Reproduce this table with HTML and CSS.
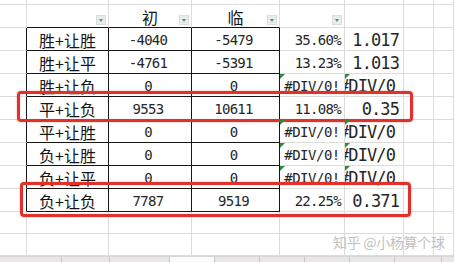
FILE: index.html
```html
<!DOCTYPE html>
<html lang="zh">
<head>
<meta charset="utf-8">
<link rel="stylesheet" href="styles.css">
</head>
<body>
<div class="sheet">
  <div class="grid">
    <!-- row 0 (partial) -->
    <div class="c"></div><div class="c"></div><div class="c"></div><div class="c"></div><div class="c"></div><div class="c"></div><div class="c"></div><div class="c"></div>
    <!-- header -->
    <div class="c"></div>
    <div class="c bb"><span class="flt"></span></div>
    <div class="c bb hd">初<span class="flt"></span></div>
    <div class="c bb hd">临<span class="flt"></span></div>
    <div class="c"><span class="flt"></span></div>
    <div class="c"></div><div class="c"></div><div class="c"></div>
    <!-- 1 -->
    <div class="c bl"></div>
    <div class="c bl bb cj">胜+让胜</div>
    <div class="c bl bb n">-4040</div>
    <div class="c bl bb n">-5479</div>
    <div class="c p">35.60%</div>
    <div class="c r">1.017</div>
    <div class="c"></div><div class="c"></div>
    <!-- 2 -->
    <div class="c bl"></div>
    <div class="c bl bb cj">胜+让平</div>
    <div class="c bl bb n">-4761</div>
    <div class="c bl bb n">-5391</div>
    <div class="c p">13.23%</div>
    <div class="c r">1.013</div>
    <div class="c"></div><div class="c"></div>
    <!-- 3 -->
    <div class="c bl"></div>
    <div class="c bl bb cj">胜+让负</div>
    <div class="c bl bb n">0</div>
    <div class="c bl bb n">0</div>
    <div class="c e tri">#DIV/0!</div>
    <div class="c x tri"><span class="clip"><span class="xt">#DIV/0!</span></span></div>
    <div class="c"></div><div class="c"></div>
    <!-- 4 -->
    <div class="c bl"></div>
    <div class="c bl bb cj">平+让负</div>
    <div class="c bl bb n">9553</div>
    <div class="c bl bb n">10611</div>
    <div class="c p">11.08%</div>
    <div class="c r">0.35</div>
    <div class="c"></div><div class="c"></div>
    <!-- 5 -->
    <div class="c bl"></div>
    <div class="c bl bb cj">平+让胜</div>
    <div class="c bl bb n">0</div>
    <div class="c bl bb n">0</div>
    <div class="c e tri">#DIV/0!</div>
    <div class="c x tri"><span class="clip"><span class="xt">#DIV/0!</span></span></div>
    <div class="c"></div><div class="c"></div>
    <!-- 6 -->
    <div class="c bl"></div>
    <div class="c bl bb cj">负+让胜</div>
    <div class="c bl bb n">0</div>
    <div class="c bl bb n">0</div>
    <div class="c e tri">#DIV/0!</div>
    <div class="c x tri"><span class="clip"><span class="xt">#DIV/0!</span></span></div>
    <div class="c"></div><div class="c"></div>
    <!-- 7 -->
    <div class="c bl"></div>
    <div class="c bl bb cj">负+让平</div>
    <div class="c bl bb n">0</div>
    <div class="c bl bb n">0</div>
    <div class="c e tri">#DIV/0!</div>
    <div class="c x tri"><span class="clip"><span class="xt">#DIV/0!</span></span></div>
    <div class="c"></div><div class="c"></div>
    <!-- 8 -->
    <div class="c bl"></div>
    <div class="c bl bb cj">负+让负</div>
    <div class="c bl bb n">7787</div>
    <div class="c bl bb n">9519</div>
    <div class="c p">22.25%</div>
    <div class="c r">0.371</div>
    <div class="c"></div><div class="c"></div>
    <!-- empty rows -->
    <div class="c"></div><div class="c"></div><div class="c"></div><div class="c"></div><div class="c"></div><div class="c"></div><div class="c"></div><div class="c"></div>
    <div class="c"></div><div class="c"></div><div class="c"></div><div class="c"></div><div class="c"></div><div class="c"></div><div class="c"></div><div class="c"></div>
  </div>
  <div class="tabs">
    <span class="t w62"></span><span class="t w48"></span><span class="t w60"></span><span class="t on w45"></span><span class="t w45"></span><span class="t w45"></span><span class="t w45"></span><span class="t w45"></span><span class="t w47"></span><span class="t fill"></span>
  </div>
  <div class="mark box1"></div>
  <div class="mark box2"></div>
  <div class="wm">知乎 @小杨算个球</div>
</div>
</body>
</html>
```

FILE: styles.css
```css
* { box-sizing: border-box; }
html, body { margin: 0; padding: 0; background: #fff; }
body {
  width: 454px;
  height: 262px;
  overflow: hidden;
  font-family: "Noto Sans CJK SC", sans-serif;
  color: #141414;
}
.sheet {
  position: relative;
  width: 454px;
  height: 262px;
  display: flex;
  flex-direction: column;
}
.grid {
  display: grid;
  grid-template-columns: 27px 82px 83px 88px 65px 59px 30px 20px;
  grid-template-rows: 5px 23px repeat(8, 23px) 22px 22px;
}
.c {
  position: relative;
  border-right: 1px solid #dcdcdc;
  border-bottom: 1px solid #dcdcdc;
  display: flex;
  align-items: center;
  justify-content: center;
  white-space: nowrap;
  line-height: 1;
}
.bl { border-right-color: #151515; }
.bb { border-bottom-color: #151515; }

.hd { font-size: 16px; padding-top: 1px; }
.cj { font-size: 16px; padding-top: 1px; }

.n, .p, .e, .r, .x {
  font-family: "DejaVu Sans Mono", monospace;
  color: #262626;
}
.n {
  font-size: 14px;
  letter-spacing: -0.7px;
  padding-right: 4px;
  padding-top: 2px;
}
.p {
  font-size: 14px;
  letter-spacing: -0.7px;
  justify-content: flex-end;
  padding-right: 3px;
  padding-top: 2px;
}
.e {
  font-size: 14px;
  letter-spacing: -0.5px;
  padding-top: 2px;
}
.r {
  font-size: 17px;
  letter-spacing: -0.9px;
  justify-content: flex-end;
  padding-right: 4px;
  padding-top: 2px;
}
.x {
  font-size: 17px;
  letter-spacing: -0.9px;
  justify-content: flex-start;
  padding-top: 2px;
}
.clip {
  display: block;
  width: 54px;
  overflow: hidden;
}
.xt {
  display: block;
  margin-left: -6px;
}

.tri::before {
  content: "";
  position: absolute;
  left: 0;
  top: 0;
  z-index: 1;
  border-top: 5px solid #2f8a3e;
  border-right: 5px solid transparent;
}

.flt {
  position: absolute;
  right: 2px;
  bottom: 2px;
  width: 10px;
  height: 10px;
  background: #e9ecea;
  border: 1px solid #d9dddb;
}
.flt::after {
  content: "";
  position: absolute;
  left: 2px;
  top: 3px;
  border-top: 3px solid #3f9a8a;
  border-left: 2.5px solid transparent;
  border-right: 2.5px solid transparent;
}

.tabs {
  display: flex;
  height: 6px;
  background: #e8e6e6;
  border-top: 1px solid #d8d6d6;
}
.t { border-right: 1px solid #c6c4c4; }
.t.on { background: #fbfbfb; }
.w62 { width: 62px; }
.w48 { width: 48px; }
.w60 { width: 60px; }
.w45 { width: 45px; }
.w47 { width: 47px; }
.fill { flex: 1; border-right: 0; }

.mark {
  position: absolute;
  border: 3px solid #e0322b;
  border-radius: 4px;
  box-shadow: 0 0 2px rgba(230, 70, 60, 0.55), inset 0 0 1px rgba(230, 70, 60, 0.4);
}
.box1 { left: 17px; top: 91px; width: 396px; height: 31px; }
.box2 { left: 20px; top: 182px; width: 391px; height: 35px; }

.wm {
  position: absolute;
  left: 333px;
  top: 235px;
  font-size: 14px;
  line-height: 14px;
  color: #c2c2c2;
  white-space: nowrap;
  letter-spacing: -0.3px;
}
```
